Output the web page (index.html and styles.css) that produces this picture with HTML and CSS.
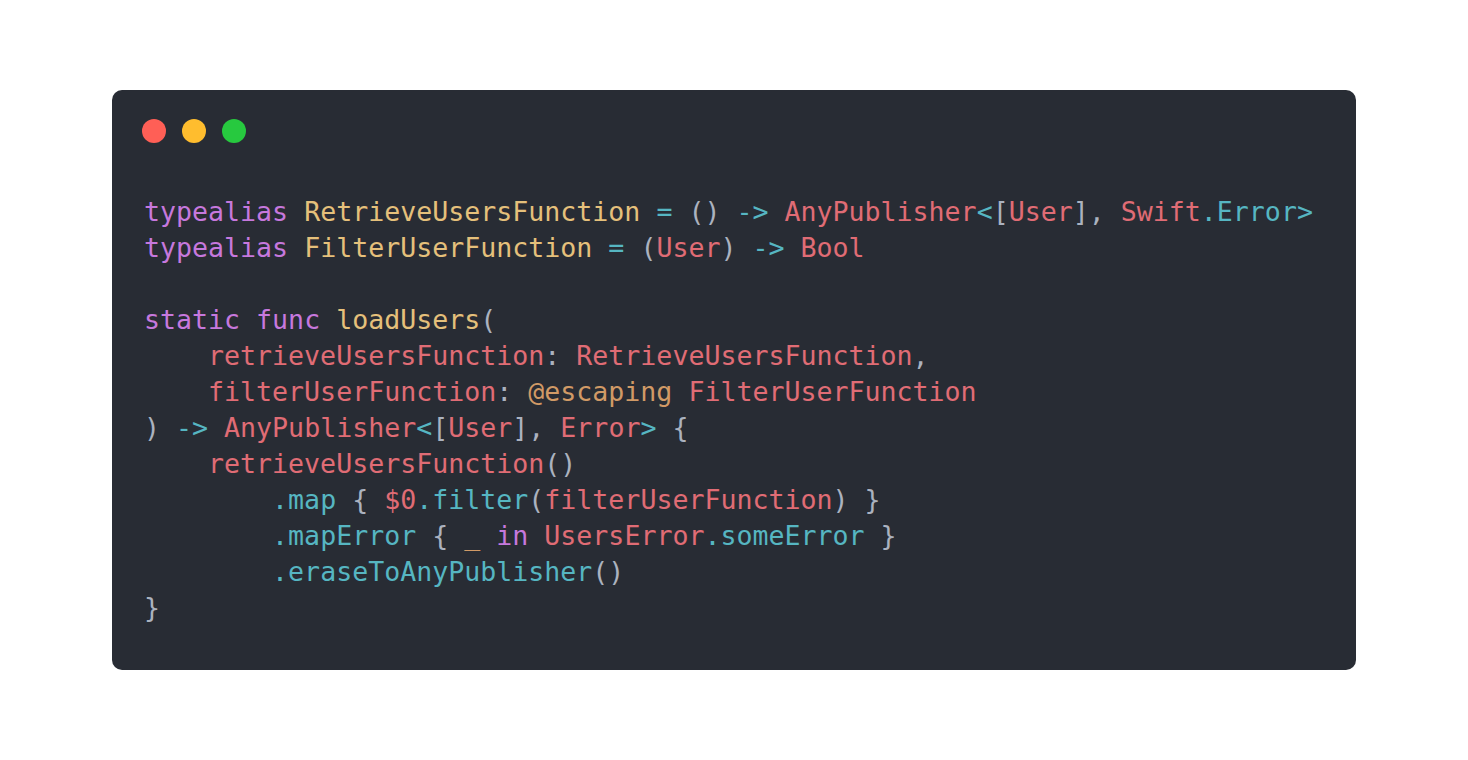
FILE: index.html
```html
<!DOCTYPE html>
<html>
<head>
<meta charset="utf-8">
<link rel="stylesheet" href="styles.css">
</head>
<body>
<div class="page">
  <div class="window">
    <div class="dots">
      <span class="dot red"></span>
      <span class="dot yellow"></span>
      <span class="dot green"></span>
    </div>
<pre class="code"><span class="k">typealias</span> <span class="t">RetrieveUsersFunction</span> <span class="c">=</span> <span class="p">()</span> <span class="c">-&gt;</span> <span class="r">AnyPublisher</span><span class="c">&lt;</span><span class="p">[</span><span class="r">User</span><span class="p">],</span> <span class="r">Swift</span><span class="c">.Error&gt;</span>
<span class="k">typealias</span> <span class="t">FilterUserFunction</span> <span class="c">=</span> <span class="p">(</span><span class="r">User</span><span class="p">)</span> <span class="c">-&gt;</span> <span class="r">Bool</span>

<span class="k">static</span> <span class="k">func</span> <span class="t">loadUsers</span><span class="p">(</span>
    <span class="r">retrieveUsersFunction</span><span class="p">:</span> <span class="r">RetrieveUsersFunction</span><span class="p">,</span>
    <span class="r">filterUserFunction</span><span class="p">:</span> <span class="o">@escaping</span> <span class="r">FilterUserFunction</span>
<span class="p">)</span> <span class="c">-&gt;</span> <span class="r">AnyPublisher</span><span class="c">&lt;</span><span class="p">[</span><span class="r">User</span><span class="p">],</span> <span class="r">Error</span><span class="c">&gt;</span> <span class="p">{</span>
    <span class="r">retrieveUsersFunction</span><span class="p">()</span>
        <span class="c">.map</span> <span class="p">{</span> <span class="r">$0</span><span class="c">.filter</span><span class="p">(</span><span class="r">filterUserFunction</span><span class="p">)</span> <span class="p">}</span>
        <span class="c">.mapError</span> <span class="p">{</span> <span class="o">_</span> <span class="k">in</span> <span class="r">UsersError</span><span class="c">.someError</span> <span class="p">}</span>
        <span class="c">.eraseToAnyPublisher</span><span class="p">()</span>
<span class="p">}</span></pre>
  </div>
</div>
</body>
</html>
```
FILE: styles.css
```css
html, body {
  margin: 0;
  padding: 0;
  background: #ffffff;
}
.page {
  height: 100vh;
  display: flex;
  align-items: center;
  justify-content: center;
}
.window {
  box-sizing: border-box;
  width: 1244px;
  height: 580px;
  background: #282c34;
  border-radius: 10px;
  padding: 29px 32px 44px 30px;
  display: flex;
  flex-direction: column;
}
.dots {
  display: flex;
  gap: 16px;
  height: 24px;
}
.dot {
  width: 24px;
  height: 24px;
  border-radius: 50%;
  display: block;
}
.red { background: #ff5f56; }
.yellow { background: #ffbd2e; }
.green { background: #27c93f; }
.code {
  margin: 51px 0 0 2px;
  font-family: "DejaVu Sans Mono", monospace;
  font-size: 26.6px;
  line-height: 36px;
  color: #abb2bf;
  white-space: pre;
}
.k { color: #c678dd; }
.t { color: #e5c07b; }
.r { color: #e06c75; }
.c { color: #56b6c2; }
.p { color: #abb2bf; }
.o { color: #d19a66; }
```
